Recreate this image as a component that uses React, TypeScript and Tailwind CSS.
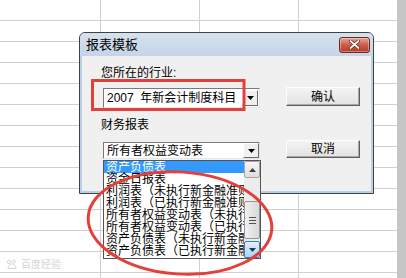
import React from 'react';

const ITEMS = [
  '资产负债表',
  '资金日报表',
  '利润表（未执行新金融准则）',
  '利润表（已执行新金融准则）',
  '所有者权益变动表（未执行新金融准则）',
  '所有者权益变动表（已执行新金融准则）',
  '资产负债表（未执行新金融准则）',
  '资产负债表（已执行新金融准则）',
];

const ROWS = Array.from({ length: 14 }, (_, i) => i);

// small black triangle used by combo buttons and scrollbar arrows
const Tri: React.FC<{ up?: boolean; color?: string }> = ({ up, color = '#000' }) => (
  <svg width="7" height="4" viewBox="0 0 7 4">
    <path d={up ? 'M0 4h7L3.5 0z' : 'M0 0h7L3.5 4z'} fill={color} />
  </svg>
);

const ComboButton = () => (
  <div className="flex h-full w-[16px] shrink-0 items-center justify-center border border-t-white border-l-white border-r-[#6b6b6b] border-b-[#6b6b6b] bg-[#f0f0f0]">
    <Tri />
  </div>
);

const DialogButton: React.FC<{ label: string; className?: string }> = ({ label, className }) => (
  <div
    className={`flex w-[74px] items-center justify-center border border-t-[#fdfdfd] border-l-[#fdfdfd] border-r-[#5e5e5e] border-b-[#5e5e5e] bg-gradient-to-b from-[#f4f4f4] to-[#e2e2e2] text-[12px] leading-none text-black shadow-[inset_-1px_-1px_0_#a8a8a8] ${className ?? ''}`}
  >
    {label}
  </div>
);

const Scrollbar = () => (
  <div className="flex w-[16px] shrink-0 flex-col bg-[#ececec]">
    <div className="flex h-[17px] items-center justify-center rounded-[2px] border border-[#a5a5a5] bg-gradient-to-b from-[#f6f6f6] to-[#dedede]">
      <Tri up color="#404040" />
    </div>
    <div className="flex flex-1 flex-col">
      <div className="h-[23px]" />
      <div className="flex h-[38px] flex-col items-center justify-center gap-[2px] rounded-[2px] border border-[#979797] bg-gradient-to-r from-[#f2f2f2] to-[#d8d8d8]">
        <div className="h-px w-[7px] bg-[#555]" />
        <div className="h-px w-[7px] bg-[#555]" />
        <div className="h-px w-[7px] bg-[#555]" />
      </div>
    </div>
    <div className="flex h-[17px] items-center justify-center rounded-[2px] border border-[#3c7fb1] bg-gradient-to-b from-[#e3f1fc] to-[#a9d3f4]">
      <Tri color="#1c3a56" />
    </div>
  </div>
);

export default function App() {
  return (
    <div className="relative h-[278px] w-[406px] overflow-hidden bg-white font-['Liberation_Sans','Noto_Sans_CJK_SC',sans-serif] text-black">
      {/* spreadsheet grid */}
      <div className="flex h-full">
        <div className="flex w-[397px] flex-col">
          {ROWS.map((r) => (
            <div key={r} className="flex h-[21px] shrink-0 border-b border-[#d0d0d0]">
              <div className="w-[101px] border-r border-[#d0d0d0]" />
              <div className="w-[99px] border-r border-[#d0d0d0]" />
              <div className="w-[99px] border-r border-[#d0d0d0]" />
              <div className="w-[98px]" />
            </div>
          ))}
        </div>
        <div className="w-[9px] bg-[#c6c6c6]" />
      </div>

      {/* watermark */}
      <div className="absolute left-[6px] top-[259px] flex items-center gap-[3px] text-[10px] leading-none text-[#d6d6d6]">
        <svg width="12" height="11" viewBox="0 0 12 11">
          <circle cx="3" cy="3" r="1.6" fill="none" stroke="#d6d6d6" />
          <circle cx="8" cy="2.5" r="1.6" fill="none" stroke="#d6d6d6" />
          <path d="M2 9.5c0-3 2-4.5 4-4.5s4 1.5 4 4.5z" fill="none" stroke="#d6d6d6" />
        </svg>
        <span>百度经验</span>
      </div>

      {/* dialog window */}
      <div className="absolute left-[79px] top-[32px] flex h-[162px] w-[295px] flex-col rounded-t-[6px] border border-[#3f4247] bg-[#b9d0e8]">
        <div className="flex h-[23px] shrink-0 items-center justify-between rounded-t-[5px] bg-gradient-to-b from-[#d6e1ee] to-[#c5d5e7] pl-[6px] pr-[3px]">
          <span className="text-[13px] leading-none">报表模板</span>
          <div className="flex h-[16px] w-[31px] items-center justify-center rounded-[3px] border border-[#6e2a22] bg-gradient-to-b from-[#e3a597] via-[#cf5a48] to-[#b8392a] shadow-[inset_0_0_0_1px_rgba(255,255,255,0.35)]">
            <svg width="11" height="9" viewBox="0 0 11 9">
              <path d="M1.5 1l8 7M9.5 1l-8 7" stroke="#5a2018" strokeWidth="3.2" strokeLinecap="round" />
              <path d="M1.5 1l8 7M9.5 1l-8 7" stroke="#fff" strokeWidth="1.8" strokeLinecap="round" />
            </svg>
          </div>
        </div>

        <div className="mx-[2px] mb-[2px] flex flex-1 flex-col bg-[#f0f0f0] pl-[19px] pt-[10px] font-['Liberation_Sans','Noto_Sans_CJK_SC',sans-serif]">
          <div className="h-[14px] text-[12px] leading-[14px]">您所在的行业:</div>

          <div className="mt-[8px] flex items-start">
            <div className="ml-[2px] flex h-[20px] w-[157px] border border-t-[#7a7a7a] border-l-[#7a7a7a] border-r-[#e6e6e6] border-b-[#e6e6e6] bg-white p-px">
              <div className="flex flex-1 items-center whitespace-pre pl-[2px] text-[12px] leading-none">2007  年新会计制度科目</div>
              <ComboButton />
            </div>
            <DialogButton label="确认" className="-mt-px ml-[26px] h-[19px]" />
          </div>

          <div className="mt-[10px] h-[14px] text-[12px] leading-[14px]">财务报表</div>

          <div className="mt-[10px] flex items-start">
            <div className="relative ml-[2px] h-[17px] w-[157px]">
              <div className="flex h-full border border-t-[#7a7a7a] border-l-[#7a7a7a] border-r-[#e6e6e6] border-b-[#e6e6e6] bg-white">
                <div className="flex flex-1 items-center pl-[3px] text-[12px] leading-none">所有者权益变动表</div>
                <ComboButton />
              </div>

              {/* open dropdown list */}
              <div className="absolute left-0 top-[18px] z-10 flex h-[99px] w-[158px] border border-[#545454] bg-white">
                <div className="flex min-w-0 flex-1 flex-col overflow-hidden">
                  {ITEMS.map((item, i) => (
                    <div
                      key={item}
                      className={`h-[12px] shrink-0 whitespace-nowrap pl-[2px] text-[12px] leading-[12px] ${
                        i === 0 ? 'bg-[#3399ff] text-white' : 'text-black'
                      }`}
                    >
                      {item}
                    </div>
                  ))}
                </div>
                <Scrollbar />
              </div>
            </div>
            <DialogButton label="取消" className="-mt-[2px] ml-[26px] h-[18px]" />
          </div>
        </div>
      </div>

      {/* red annotations */}
      <svg className="pointer-events-none absolute inset-0 z-20" width="406" height="278" viewBox="0 0 406 278">
        <rect x="92.5" y="80.5" width="151.5" height="29" fill="none" stroke="#e3403c" strokeWidth="3" />
        <ellipse cx="180" cy="223" rx="92" ry="51" transform="rotate(4 180 223)" fill="none" stroke="#e3403c" strokeWidth="3" />
      </svg>
    </div>
  );
}
